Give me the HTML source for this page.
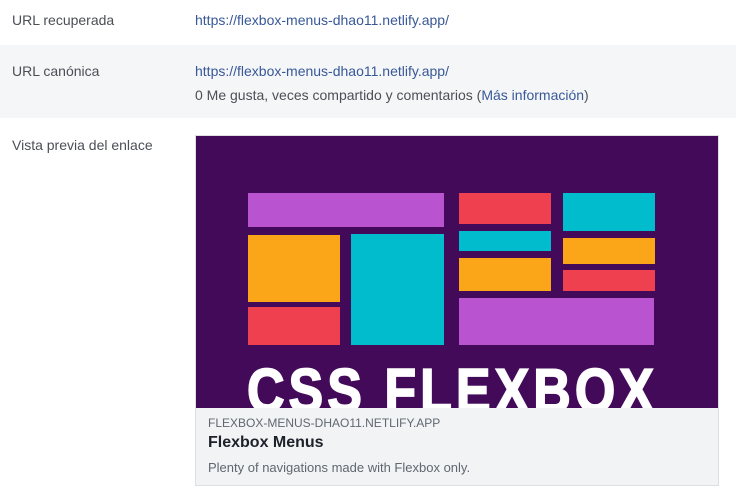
<!DOCTYPE html>
<html><head><meta charset="utf-8"><style>
body{margin:0;width:736px;height:500px;background:#fff;font-family:"Liberation Sans",Arial,sans-serif;position:relative;overflow:hidden;font-size:14px;color:#4b4f56}
.t{position:absolute;white-space:nowrap}
.l{color:#385898}
.r{position:absolute}
</style></head><body>
<div class="r" style="left:0;top:45px;width:736px;height:73px;background:#f5f6f7"></div>
<div class="t" style="left:12px;top:12px">URL recuperada</div>
<div class="t l" style="left:195px;top:12px">https://flexbox-menus-dhao11.netlify.app/</div>
<div class="t" style="left:12px;top:63px">URL canónica</div>
<div class="t l" style="left:195px;top:63px">https://flexbox-menus-dhao11.netlify.app/</div>
<div class="t" style="left:195px;top:87px">0 Me gusta, veces compartido y comentarios (<span class="l">Más información</span>)</div>
<div class="t" style="left:12px;top:137px">Vista previa del enlace</div>
<div class="r" style="left:195px;top:135px;width:524px;height:351px;border:1px solid #dddfe2;box-sizing:border-box;background:#f2f3f5;overflow:hidden">
 <div class="r" style="left:0;top:0;width:524px;height:272px;background:#430a5a;overflow:hidden">
  <div class="r" style="left:52px;top:57px;width:196px;height:34px;background:#b953d0"></div>
  <div class="r" style="left:52px;top:99px;width:92px;height:67px;background:#fba618"></div>
  <div class="r" style="left:52px;top:171px;width:92px;height:38px;background:#ef404f"></div>
  <div class="r" style="left:155px;top:98px;width:93px;height:111px;background:#00bccd"></div>
  <div class="r" style="left:263px;top:57px;width:92px;height:31px;background:#ef404f"></div>
  <div class="r" style="left:263px;top:95px;width:92px;height:20px;background:#00bccd"></div>
  <div class="r" style="left:263px;top:122px;width:92px;height:33px;background:#fba618"></div>
  <div class="r" style="left:367px;top:57px;width:92px;height:38px;background:#00bccd"></div>
  <div class="r" style="left:367px;top:102px;width:92px;height:26px;background:#fba618"></div>
  <div class="r" style="left:367px;top:134px;width:92px;height:21px;background:#ef404f"></div>
  <div class="r" style="left:263px;top:162px;width:195px;height:47px;background:#b953d0"></div>
  <div class="t" style="left:51px;top:214px;font-size:52px;font-weight:900;color:#fff;letter-spacing:4px;line-height:70px;-webkit-text-stroke:1.5px #fff;transform:scaleY(1.18);transform-origin:0 0">CSS FLEXBOX</div>
 </div>
 <div class="t" style="left:12px;top:280px;font-size:12px;color:#606770">FLEXBOX-MENUS-DHAO11.NETLIFY.APP</div>
 <div class="t" style="left:12px;top:298px;font-size:16px;font-weight:bold;color:#1d2129">Flexbox Menus</div>
 <div class="t" style="left:12px;top:324px;font-size:13px;color:#606770">Plenty of navigations made with Flexbox only.</div>
</div>
</body></html>
